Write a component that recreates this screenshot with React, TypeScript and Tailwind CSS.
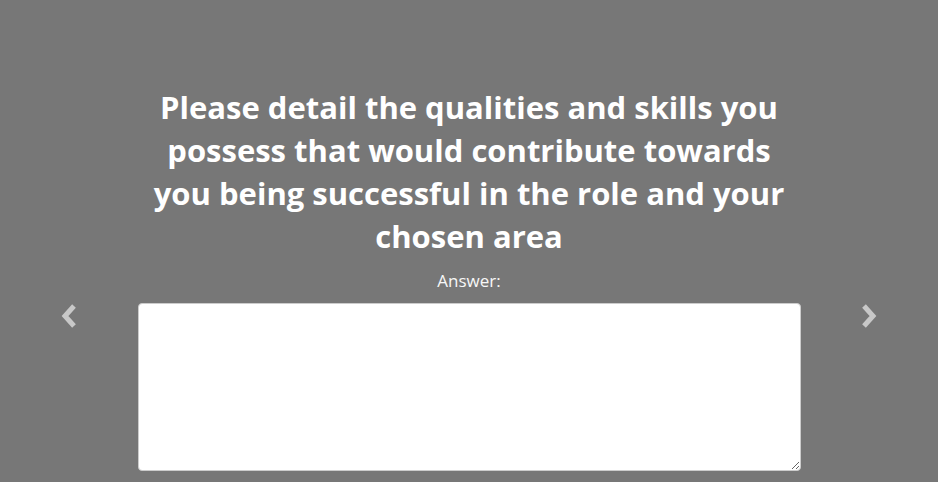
function Arrow({ dir }: { dir: 'left' | 'right' }) {
  return (
    <svg width="18" height="26" viewBox="0 0 18 26" className="text-[#c8c8c8]">
      <polyline
        points={dir === 'left' ? '14,3 5,13 14,23' : '4,3 13,13 4,23'}
        fill="none"
        stroke="currentColor"
        strokeWidth="5"
        strokeLinejoin="miter"
      />
    </svg>
  );
}

export default function App() {
  return (
    <div
      className="w-[938px] h-[482px] overflow-hidden bg-[#777777] text-white"
      style={{ fontFamily: '"Open Sans", "Noto Sans", sans-serif' }}
    >
      <div className="flex justify-center pt-[86px]">
        <h1 className="w-[660px] text-[31px] leading-[43px] font-bold text-center">
          Please detail the qualities and skills you possess that would contribute towards
          you being successful in the role and your chosen area
        </h1>
      </div>
      <p className="text-center text-[17px] leading-[22px] mt-[12px] text-[#f7f7f7]">Answer:</p>
      <div className="flex items-start mt-[11px]">
        <div className="flex-1 flex justify-center">
          <Arrow dir="left" />
        </div>
        <textarea className="w-[663px] h-[168px] bg-white rounded-[4px] border border-[#ccc] resize-y outline-none block" />
        <div className="flex-1 flex justify-center">
          <Arrow dir="right" />
        </div>
      </div>
    </div>
  );
}
